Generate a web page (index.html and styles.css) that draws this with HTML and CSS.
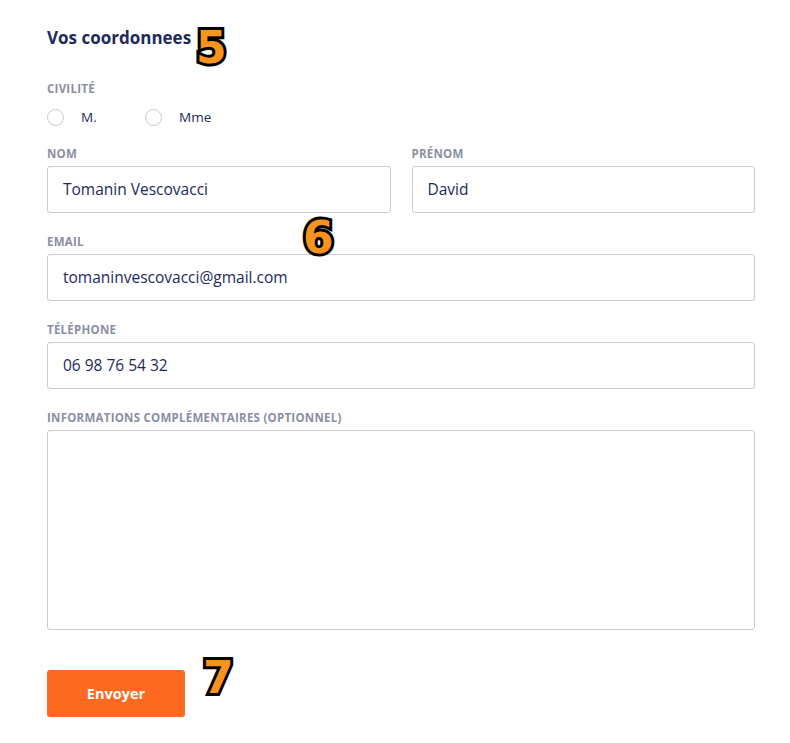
FILE: index.html
```html
<!DOCTYPE html>
<html lang="fr">
<head>
<meta charset="utf-8">
<link rel="stylesheet" href="styles.css">
</head>
<body>
<form class="form">
  <h2 class="title">Vos coordonnees</h2>
  <div class="group group-civ">
    <div class="label">CIVILITÉ</div>
    <div class="radios">
      <label class="radio"><span class="circle"></span>M.</label>
      <label class="radio"><span class="circle"></span>Mme</label>
    </div>
  </div>
  <div class="row">
    <div class="group">
      <div class="label">NOM</div>
      <div class="input">Tomanin Vescovacci</div>
    </div>
    <div class="group">
      <div class="label">PRÉNOM</div>
      <div class="input">David</div>
    </div>
  </div>
  <div class="group">
    <div class="label">EMAIL</div>
    <div class="input">tomaninvescovacci@gmail.com</div>
  </div>
  <div class="group">
    <div class="label">TÉLÉPHONE</div>
    <div class="input">06 98 76 54 32</div>
  </div>
  <div class="group">
    <div class="label">INFORMATIONS COMPLÉMENTAIRES (OPTIONNEL)</div>
    <div class="textarea"></div>
  </div>
  <div class="actions">
    <button type="button" class="btn">Envoyer</button>
  </div>
  <span class="mark mark5">5</span>
  <span class="mark mark6">6</span>
  <span class="mark mark7">7</span>
</form>
</body>
</html>
```
FILE: styles.css
```css
* { box-sizing: border-box; }
body {
  margin: 0;
  background: #fff;
  font-family: "Open Sans", "Noto Sans", sans-serif;
  color: #1e2a5c;
}
.form {
  position: relative;
  width: 708px;
  margin-left: 47px;
  padding-top: 28px;
  display: flex;
  flex-direction: column;
}
.title {
  margin: 0 0 34px;
  font-size: 17px;
  line-height: 20px;
  font-weight: 700;
  color: #1e2a5c;
}
.group {
  display: flex;
  flex-direction: column;
  margin-bottom: 22px;
}
.group-civ { margin-bottom: 21px; }
.row {
  display: flex;
  gap: 21px;
}
.row .group { flex: 1; }
.label {
  font-size: 11.5px;
  line-height: 14px;
  font-weight: 700;
  color: #8b8fa1;
  margin-bottom: 5px;
  letter-spacing: 0.25px;
}
.radios {
  display: flex;
  margin-top: 7px;
}
.radio {
  display: flex;
  align-items: center;
  width: 98px;
  height: 18px;
  font-size: 13.5px;
  line-height: 18px;
  color: #1e2a5c;
}
.circle {
  width: 17px;
  height: 17px;
  border: 1px solid #c6c9d5;
  border-radius: 50%;
  margin-right: 17px;
}
.input {
  height: 47px;
  border: 1px solid #c9cbd6;
  border-radius: 3px;
  padding: 0 15px 2px;
  display: flex;
  align-items: center;
  font-size: 15.5px;
  color: #1e2a5c;
}
.textarea {
  height: 200px;
  border: 1px solid #c9cbd6;
  border-radius: 3px;
}
.actions {
  margin-top: 18px;
}
.btn {
  width: 138px;
  height: 47px;
  border: 0;
  border-radius: 3px;
  background: #ff6a22;
  color: #fff;
  font-family: "Open Sans", "Noto Sans", sans-serif;
  font-size: 14.5px;
  font-weight: 700;
}
.mark {
  position: absolute;
  font-family: "DejaVu Sans", sans-serif;
  font-weight: 700;
  font-size: 44px;
  line-height: 1;
  color: #f7931e;
  -webkit-text-stroke: 6px #000;
  paint-order: stroke fill;
  text-shadow: 1px 2px 2px rgba(0,0,0,0.4);
}
.mark5 { left: 149px; top: 26px; }
.mark6 { left: 256px; top: 216px; }
.mark7 { left: 156px; top: 656px; }
```
